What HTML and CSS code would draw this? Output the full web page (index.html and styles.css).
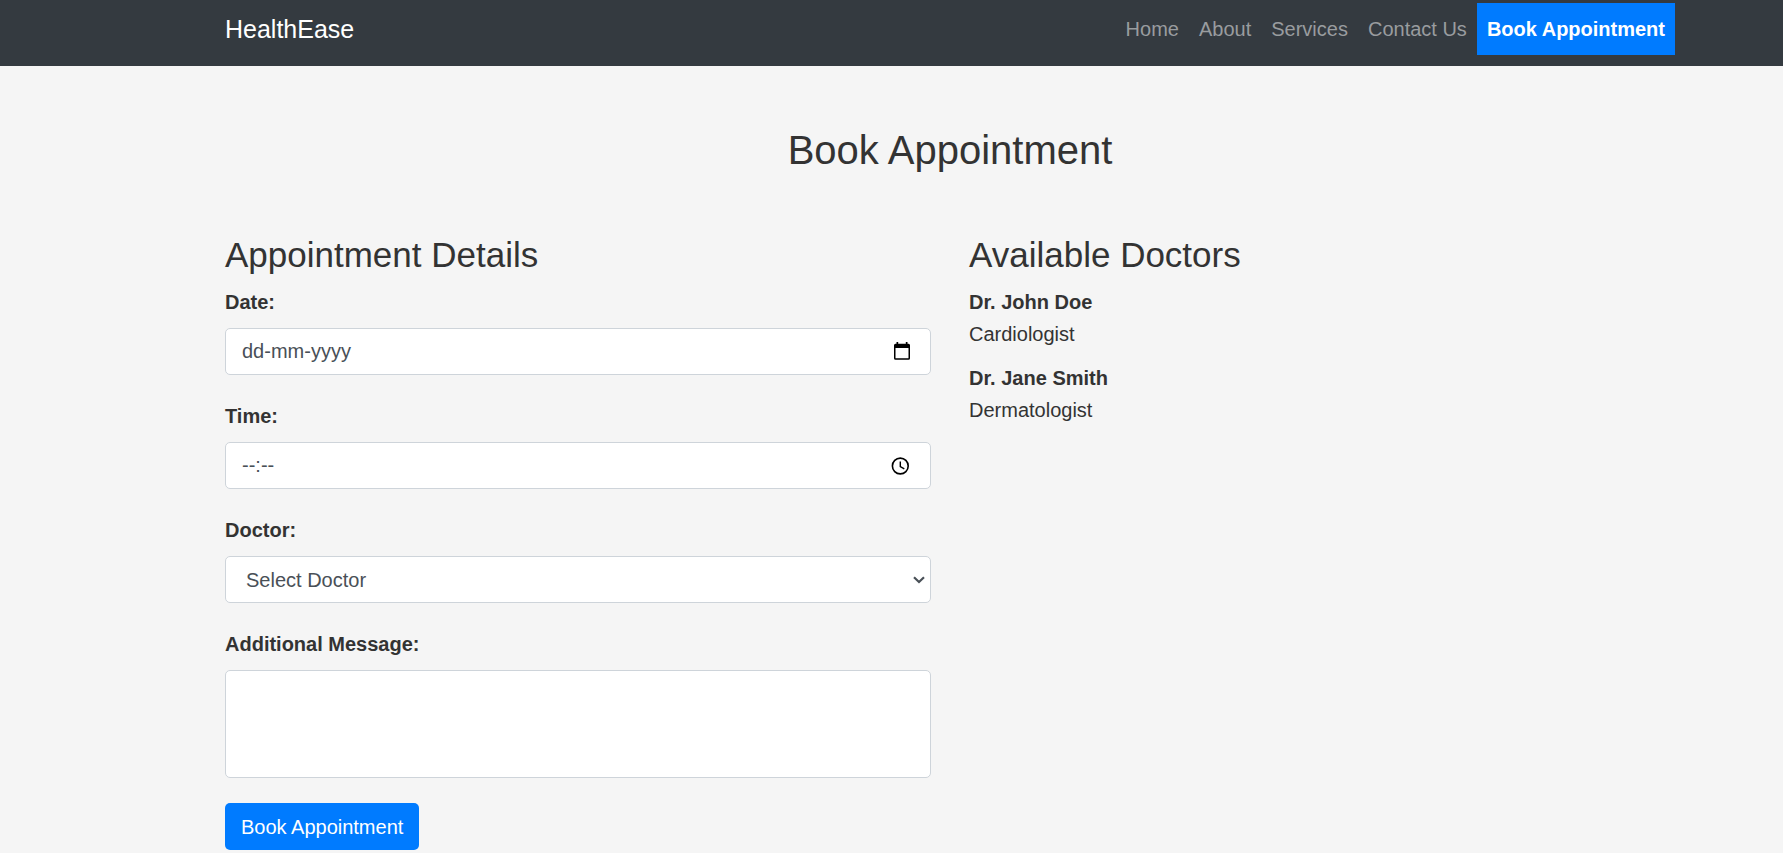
FILE: index.html
```html
<!DOCTYPE html>
<html lang="en">
<head>
  <meta charset="utf-8">
  <meta name="viewport" content="width=device-width, initial-scale=1">
  <title>HealthEase - Book Appointment</title>
  <link rel="stylesheet" href="styles.css">
</head>
<body>
  <header class="navbar">
    <a class="brand" href="#">HealthEase</a>
    <nav class="nav-links">
      <a class="nav-link" href="#">Home</a>
      <a class="nav-link" href="#">About</a>
      <a class="nav-link" href="#">Services</a>
      <a class="nav-link" href="#">Contact Us</a>
      <a class="nav-link active" href="#">Book Appointment</a>
    </nav>
  </header>

  <main class="page">
    <h1 class="page-title">Book Appointment</h1>
    <div class="columns">
      <section>
        <h2 class="section-title">Appointment Details</h2>
        <form class="form">
          <div class="field">
            <label for="date">Date:</label>
            <div class="control">
              <input class="input" id="date" type="text" placeholder="dd-mm-yyyy">
              <button class="picker" type="button" aria-label="Open calendar">
                <svg width="18" height="20" viewBox="0 0 18 20" aria-hidden="true">
                  <path fill="#000" fill-rule="evenodd" d="M3.500 0h1.700v1.700h7.600V0h1.700v1.700h1q1.500 0 1.500 1.500v13q0 1.500-1.500 1.500h-13Q1 17.700 1 16.200v-13Q1 1.700 2.500 1.700h1zM2.500 6v10.200h13V6z"/>
                </svg>
              </button>
            </div>
          </div>
          <div class="field">
            <label for="time">Time:</label>
            <div class="control">
              <input class="input" id="time" type="text" placeholder="--:--">
              <button class="picker" type="button" aria-label="Open time picker">
                <svg width="20" height="18" viewBox="0 0 20 18" fill="none" stroke="#000" aria-hidden="true">
                  <circle cx="9.300" cy="9" r="7.900" stroke-width="1.600"/>
                  <path stroke-width="1.400" d="M9.300 4.500v5l4 2.400"/>
                </svg>
              </button>
            </div>
          </div>
          <div class="field">
            <label for="doctor">Doctor:</label>
            <div class="control">
              <select class="input select" id="doctor">
                <option>Select Doctor</option>
                <option>Dr. John Doe</option>
                <option>Dr. Jane Smith</option>
              </select>
              <svg class="chevron" width="12" height="8" viewBox="0 0 12 8" fill="none" stroke="#495057" stroke-width="2.200" aria-hidden="true">
                <path d="M1 1.200l5 4.800 5-4.800"/>
              </svg>
            </div>
          </div>
          <div class="field">
            <label for="message">Additional Message:</label>
            <textarea class="input textarea" id="message"></textarea>
          </div>
          <button class="submit" type="submit">Book Appointment</button>
        </form>
      </section>

      <section>
        <h2 class="section-title">Available Doctors</h2>
        <ul class="doctors">
          <li><strong>Dr. John Doe</strong><span>Cardiologist</span></li>
          <li><strong>Dr. Jane Smith</strong><span>Dermatologist</span></li>
        </ul>
      </section>
    </div>
  </main>
</body>
</html>
```

FILE: styles.css
```css
* {
  box-sizing: border-box;
}

body {
  margin: 0;
  background: #f5f5f5;
  color: #333;
  font-family: "Liberation Sans", Arial, sans-serif;
  font-size: 20px;
  line-height: 32px;
}

.navbar {
  display: flex;
  align-items: center;
  justify-content: space-between;
  padding: 3px 108px 11px 225px;
  background: #343a40;
}

.brand {
  color: #fff;
  font-size: 25px;
  text-decoration: none;
}

.nav-links {
  display: flex;
}

.nav-link {
  padding: 10px;
  color: #999c9f;
  text-decoration: none;
}

.nav-link.active {
  background: #007bff;
  color: #fff;
  font-weight: 700;
}

.page {
  padding: 60px 108px 0 225px;
}

.page-title {
  margin: 0 0 60px;
  font-size: 40px;
  font-weight: 400;
  line-height: 48px;
  text-align: center;
}

.columns {
  display: grid;
  grid-template-columns: 1fr 1fr;
  column-gap: 38px;
}

.section-title {
  margin: 0 0 10px;
  font-size: 35px;
  font-weight: 400;
  line-height: 42px;
}

.form {
  display: flex;
  flex-direction: column;
  align-items: flex-start;
  gap: 25px;
}

.field {
  display: flex;
  flex-direction: column;
  gap: 10px;
  width: 100%;
}

.field label {
  font-weight: 700;
}

.control {
  position: relative;
}

.input {
  display: block;
  width: 100%;
  height: 47px;
  padding: 0 16px;
  border: 1px solid #ced4da;
  border-radius: 5px;
  background: #fff;
  color: #495057;
  font: inherit;
}

.input::placeholder {
  color: #495057;
  opacity: 1;
}

.select {
  padding: 0 20px;
  appearance: none;
}

.textarea {
  height: 108px;
  resize: none;
}

.picker {
  position: absolute;
  top: 0;
  right: 20px;
  bottom: 0;
  display: flex;
  align-items: center;
  padding: 0;
  border: 0;
  background: none;
}

.chevron {
  position: absolute;
  top: 20px;
  right: 6px;
  pointer-events: none;
}

.submit {
  height: 47px;
  padding: 0 16px;
  border: 0;
  border-radius: 5px;
  background: #007bff;
  color: #fff;
  font: inherit;
}

.doctors {
  display: flex;
  flex-direction: column;
  gap: 12px;
  margin: 0;
  padding: 0;
  list-style: none;
}

.doctors li {
  display: flex;
  flex-direction: column;
}
```
